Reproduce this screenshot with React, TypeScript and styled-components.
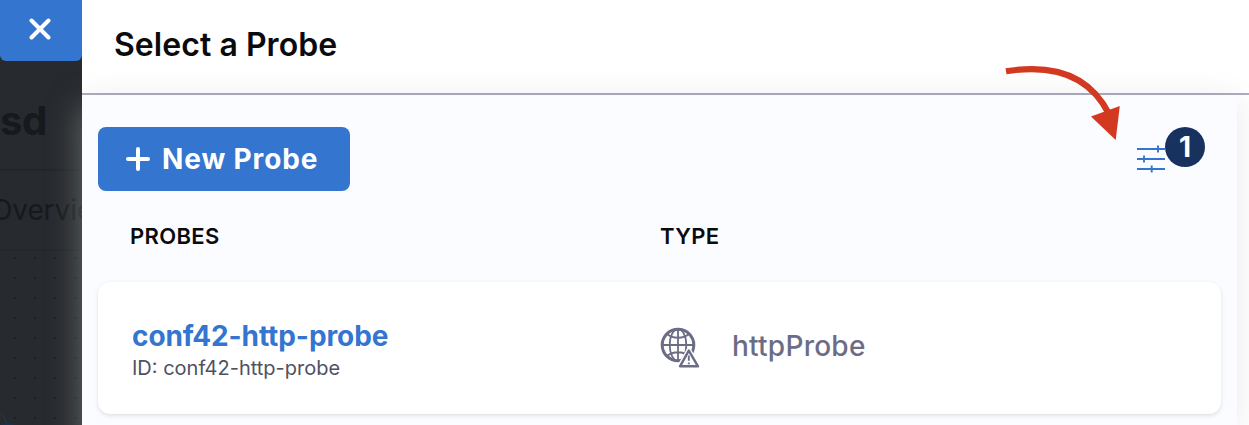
import React from 'react';
import styled, { createGlobalStyle } from 'styled-components';

const GlobalStyle = createGlobalStyle`
  * { box-sizing: border-box; }
  body { margin: 0; background: #fff; font-family: Inter, sans-serif; }
`;

const Screen = styled.div`
  position: relative;
  display: flex;
  width: 1249px;
  height: 425px;
  overflow: hidden;
  background: #fff;
`;

const Backdrop = styled.aside`
  position: relative;
  display: flex;
  flex-direction: column;
  flex: 0 0 82px;
  overflow: hidden;
  background: #272a2e;
  color: #16191d;
`;

const CloseButton = styled.button`
  display: flex;
  align-items: center;
  justify-content: center;
  height: 61px;
  flex: none;
  padding: 0 2px 3px 0;
  border: 0;
  border-radius: 0 0 6px 6px;
  background: #3475cf;
`;

const PageTitle = styled.div`
  flex: none;
  height: 110px;
  padding-top: 34px;
  border-bottom: 2px solid #222529;
  font-size: 40px;
  line-height: 52px;
  font-weight: 700;
  letter-spacing: -0.5px;
  white-space: nowrap;
`;

const PageTab = styled.div`
  flex: none;
  height: 80px;
  margin-left: -9px;
  border-bottom: 2px solid #24272b;
  font-size: 28px;
  line-height: 79px;
  letter-spacing: -0.1px;
  white-space: nowrap;
`;

const Canvas = styled.div`
  display: flex;
  flex: 1;
  align-items: flex-end;
  background-image: radial-gradient(circle, #1d2024 1px, transparent 1.5px);
  background-size: 20px 20px;
  background-position: 5px -3px;
`;

const Glow = styled.div`
  position: absolute;
  left: 82px;
  top: 108px;
  width: 60px;
  height: 400px;
  box-shadow: 0 0 32px 1px rgba(128, 132, 133, 0.7);
`;

const Drawer = styled.main`
  display: flex;
  flex-direction: column;
  flex: 1;
  overflow: hidden;
`;

const Header = styled.header`
  height: 95px;
  flex: none;
  padding: 22px 32px 0;
  border-bottom: 2px solid #adadbf;
  color: #0b0b0d;
`;

const Title = styled.h1`
  margin: 0;
  font-size: 32px;
  line-height: 46px;
  font-weight: 600;
  letter-spacing: 0.05px;
`;

const Content = styled.section`
  flex: 1;
  margin-right: 12px;
  padding: 32px 16px 0;
  background: #fbfcff;
  box-shadow: 0 4px 32px rgba(0, 0, 0, 0.09);
  clip-path: inset(-40px -12px 0 0);
`;

const Toolbar = styled.div`
  display: flex;
  justify-content: space-between;
  height: 64px;
  padding-right: 16px;
`;

const NewProbe = styled.button`
  display: flex;
  align-items: center;
  gap: 12px;
  width: 252px;
  height: 64px;
  padding: 0 0 0 28px;
  border: 0;
  border-radius: 8px;
  background: #3475cf;
  color: #fff;
  font: 700 28px/64px Inter, sans-serif;
  letter-spacing: 0.88px;
  white-space: nowrap;
`;

const Filter = styled.div`
  display: flex;
  align-items: flex-start;
`;

const FilterIcon = styled.svg`
  margin-top: 16px;
`;

const Badge = styled.span`
  width: 40px;
  height: 40px;
  border-radius: 50%;
  background: #183260;
  color: #fff;
  font-size: 28px;
  line-height: 40px;
  font-weight: 700;
  text-align: center;
`;

const Columns = styled.div`
  display: grid;
  grid-template-columns: 530px 1fr;
`;

const TableHead = styled(Columns)`
  height: 90px;
  padding: 29px 32px 0;
  color: #0b0b0d;
  font-size: 22px;
  line-height: 32px;
  font-weight: 600;
  letter-spacing: 0.35px;
`;

const Row = styled(Columns)`
  height: 132px;
  padding: 0 34px;
  margin-top: 1px;
  border-radius: 12px;
  background: #fff;
  box-shadow: 0 2px 4px rgba(96, 97, 112, 0.16), 0 0 2px rgba(40, 41, 61, 0.04);
`;

const Probe = styled.div`
  padding-top: 36px;
`;

const ProbeName = styled.div`
  color: #3475cf;
  font-size: 28px;
  line-height: 36px;
  font-weight: 700;
  letter-spacing: -0.08px;
`;

const ProbeId = styled.div`
  color: #4f5162;
  font-size: 20px;
  line-height: 28px;
`;

const ProbeType = styled.div`
  display: flex;
  gap: 32px;
  margin-left: -2px;
  padding-top: 44px;
  color: #6b6d85;
  font-size: 28px;
  line-height: 40px;
  font-weight: 500;
  letter-spacing: 0.25px;
`;

const Pointer = styled.svg`
  position: absolute;
  left: 1000px;
  top: 58px;
`;

export default function App() {
  return (
    <>
      <GlobalStyle />
      <Screen>
        <Backdrop>
          <CloseButton aria-label="Close">
            <svg width="22" height="22" viewBox="0 0 22 22" fill="none" stroke="#fff" strokeWidth="4" strokeLinecap="round">
              <path d="M2.5 2.5l17 17M19.5 2.5l-17 17" />
            </svg>
          </CloseButton>
          <PageTitle>sd</PageTitle>
          <PageTab>Overvie</PageTab>
          <Canvas>
            <svg width="20" height="30" viewBox="0 0 20 30">
              <path d="M-3 15C2 18 5 22 7 30" fill="none" stroke="#34373b" />
              <circle cx="8" cy="36" r="9" fill="#19324d" />
            </svg>
          </Canvas>
          <Glow />
        </Backdrop>
        <Drawer>
          <Header>
            <Title>Select a Probe</Title>
          </Header>
          <Content>
            <Toolbar>
              <NewProbe>
                <svg width="24" height="24" viewBox="0 0 24 24" fill="none" stroke="#fff" strokeWidth="4" strokeLinecap="round">
                  <path d="M2 12h20M12 2v20" />
                </svg>
                New Probe
              </NewProbe>
              <Filter>
                <FilterIcon width="28" height="32" viewBox="0 0 28 32" fill="none" stroke="#3475cf" strokeWidth="1.9">
                  <path d="M0 6h28M0 16h28M0 26h28M21 2.5v7M7 12.5v7M14.7 22.5v7" />
                </FilterIcon>
                <Badge>1</Badge>
              </Filter>
            </Toolbar>
            <TableHead>
              <span>PROBES</span>
              <span>TYPE</span>
            </TableHead>
            <Row>
              <Probe>
                <ProbeName>conf42-http-probe</ProbeName>
                <ProbeId>ID: conf42-http-probe</ProbeId>
              </Probe>
              <ProbeType>
                <svg width="40" height="42" viewBox="0 0 40 42" fill="none" stroke="#6b6d85">
                  <circle cx="18" cy="19" r="15.8" strokeWidth="3" />
                  <path strokeWidth="1.8" d="M2 19h32M18 3v32M7 8c6 5 16 5 22 0M7 30c6-5 16-5 22 0" />
                  <ellipse cx="18" cy="19" rx="8.3" ry="16" strokeWidth="1.8" />
                  <path d="M28.8 24.5L20 40h17.8z" fill="#fff" stroke="#fff" strokeWidth="5" strokeLinejoin="round" />
                  <path d="M28.8 24.6L20 40.3h18z" fill="#fff" strokeWidth="2.4" strokeLinejoin="round" />
                  <path d="M28.8 29.5v5.2M28.8 36.4v1.9" strokeWidth="1.9" />
                </svg>
                <span>httpProbe</span>
              </ProbeType>
            </Row>
          </Content>
        </Drawer>
        <Pointer width="124" height="86" viewBox="0 0 124 86">
          <path d="M6 13.3C54 5.5 90 18 109 56" fill="none" stroke="#d23920" strokeWidth="6.2" />
          <path d="M91 58.5L119.8 48L115.7 82z" fill="#d23920" />
        </Pointer>
      </Screen>
    </>
  );
}
